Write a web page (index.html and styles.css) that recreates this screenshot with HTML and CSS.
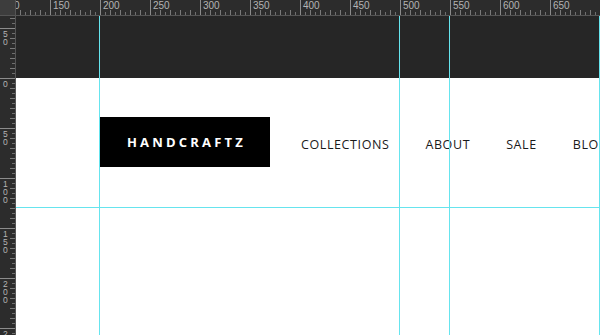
FILE: index.html
```html
<!DOCTYPE html>
<html>
<head>
<meta charset="utf-8">
<link rel="stylesheet" href="styles.css">
</head>
<body>
<div class="app">
  <div class="top">
    <div class="corner"></div>
    <div class="hruler">
      <div class="hstrip">
        <span>100</span><span>150</span><span>200</span><span>250</span><span>300</span><span>350</span><span>400</span><span>450</span><span>500</span><span>550</span><span>600</span><span>650</span>
      </div>
    </div>
  </div>
  <div class="main">
    <div class="vruler">
      <div class="vstrip">
        <span>1<br>0<br>0</span><span>5<br>0</span><span>0</span><span>5<br>0</span><span>1<br>0<br>0</span><span>1<br>5<br>0</span><span>2<br>0<br>0</span><span>2<br>5<br>0</span>
      </div>
    </div>
    <div class="canvas">
      <div class="band"></div>
      <div class="page">
        <header class="header">
          <div class="logo">HANDCRAFTZ</div>
          <nav class="nav">
            <a>COLLECTIONS</a>
            <a>ABOUT</a>
            <a>SALE</a>
            <a>BLOG</a>
          </nav>
        </header>
      </div>
    </div>
  </div>
  <div class="guides">
    <div class="guide v g1"></div>
    <div class="guide v g2"></div>
    <div class="guide v g3"></div>
    <div class="guide v g4"></div>
    <div class="guide h g5"></div>
  </div>
</div>
</body>
</html>
```

FILE: styles.css
```css
* { box-sizing: border-box; }
html, body { margin: 0; padding: 0; }
body {
  width: 600px;
  height: 335px;
  overflow: hidden;
  background: #ffffff;
  font-family: "Liberation Sans", Arial, sans-serif;
}
.app {
  position: relative;
  width: 600px;
  height: 335px;
  overflow: hidden;
}
.top {
  display: flex;
  height: 16px;
}
.corner {
  width: 16px;
  height: 16px;
  flex: none;
  background: #3d3d3d;
  border-right: 1px solid #555;
  border-bottom: 1px solid #555;
}
.hruler {
  flex: 1;
  overflow: hidden;
  background: #2c2c2c;
  border-bottom: 1px solid #555;
}
.hstrip {
  margin-left: -16px;
  display: flex;
  height: 15px;
  width: 700px;
  background:
    repeating-linear-gradient(to right, #8c8c8c 0 1px, transparent 1px 50px) 0 0 / 100% 15px no-repeat,
    repeating-linear-gradient(to right, #7a7a7a 0 1px, transparent 1px 10px) 0 100% / 100% 5px no-repeat,
    repeating-linear-gradient(to right, #6e6e6e 0 1px, transparent 1px 5px) 0 100% / 100% 3px no-repeat;
}
.hstrip span {
  width: 50px;
  flex: none;
  padding-left: 3px;
  font-size: 10px;
  line-height: 10px;
  padding-top: 1px;
  color: #b4b4b4;
}
.main {
  display: flex;
  height: 319px;
}
.vruler {
  width: 16px;
  flex: none;
  overflow: hidden;
  background: #2c2c2c;
  border-right: 1px solid #555;
}
.vstrip {
  margin-top: -38px;
  display: flex;
  flex-direction: column;
  width: 15px;
  height: 420px;
  background:
    repeating-linear-gradient(to bottom, #8c8c8c 0 1px, transparent 1px 50px) 0 0 / 15px 100% no-repeat,
    repeating-linear-gradient(to bottom, #7a7a7a 0 1px, transparent 1px 10px) 100% 0 / 5px 100% no-repeat,
    repeating-linear-gradient(to bottom, #6e6e6e 0 1px, transparent 1px 5px) 100% 0 / 3px 100% no-repeat;
}
.vstrip span {
  height: 50px;
  flex: none;
  padding-top: 2px;
  padding-left: 3px;
  font-size: 8.5px;
  line-height: 8px;
  color: #b4b4b4;
}
.canvas {
  flex: 1;
  overflow: hidden;
  display: flex;
  flex-direction: column;
}
.band {
  height: 62px;
  flex: none;
  background: #262626;
}
.page {
  flex: 1;
  background: #fff;
  padding: 39px 0 0 84px;
}
.header {
  display: flex;
  align-items: center;
  white-space: nowrap;
}
.logo {
  width: 170px;
  height: 50px;
  flex: none;
  background: #000;
  color: #fff;
  display: flex;
  align-items: center;
  justify-content: center;
  font-family: "Open Sans", sans-serif;
  font-weight: 700;
  font-size: 13px;
  letter-spacing: 3.2px;
  padding-left: 3px;
}
.nav {
  display: flex;
  gap: 36px;
  margin-left: 31px;
  padding-top: 5px;
}
.nav a {
  font-family: "Open Sans", sans-serif;
  font-size: 12.5px;
  letter-spacing: 0.6px;
  color: #1a1a1a;
}
.guides {
  position: absolute;
  inset: 0;
  pointer-events: none;
}
.guide {
  position: absolute;
  background: #66e4ee;
}
.guide.v { top: 16px; bottom: 0; width: 1px; }
.g1 { left: 99px; }
.g2 { left: 399px; }
.g3 { left: 449px; }
.g4 { left: 599px; }
.guide.h { left: 16px; right: 0; height: 1px; top: 207px; }
```
